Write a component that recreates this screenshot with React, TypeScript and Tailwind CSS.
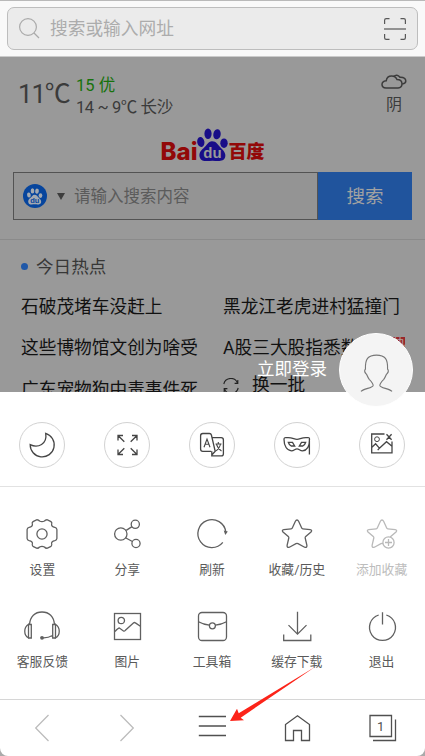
import type { ReactNode } from "react";
import clsx from "clsx";

const Icon = ({
  children,
  width = 1.3,
  className = "text-[#606060]",
}: {
  children: ReactNode;
  width?: number;
  className?: string;
}) => (
  <svg
    viewBox="-18 -18 36 36"
    className={clsx("size-9 shrink-0", className)}
    fill="none"
    stroke="currentColor"
    strokeWidth={width}
  >
    {children}
  </svg>
);

const STAR =
  "M0-14 Q1-14 1.6-12.8 L4.7-6 Q5-5.3 5.8-5.2 L13.2-4.4 Q15.6-4 14-2 L8.7 2.6 Q8 3.2 8.2 4 L9.9 11.4 Q10 14 7.6 13.2 L1 9.7 Q0 9.2-1 9.7 L-7.6 13.2 Q-10 14-9.9 11.4 L-8.2 4 Q-8 3.2-8.7 2.6 L-14-2 Q-15.6-4-13.2-4.4 L-5.8-5.2 Q-5-5.3-4.7-6 L-1.6-12.8 Q-1-14 0-14Z";

const quickActions = [
  {
    name: "night",
    icon: <path d="M3.7-11.6 A12 12 0 1 1-11.8-0.4 C-4 3.5 5.5-1 3.7-11.6Z" />,
  },
  {
    name: "fullscreen",
    icon: (
      <path d="M-2.7-3.2-9-9.5M-9-4.5V-9.5H-4M3.7-3.2 10-9.5M5-9.5H10V-4.5M-2.7 3.2-9 9.5M-9 4.5V9.5H-4M3.7 3.2 10 9.5M5 9.5H10V4.5" />
    ),
  },
  {
    name: "translate",
    icon: (
      <>
        <path d="M-.8 6.3H-9.2Q-11.4 6.3-11.4 4.1V-9.3Q-11.4-11.5-9.2-11.5H-2.6Q-1-11.5-.6-10L3.2 6.3-.2 10V6.3M0.2-7.3H9.2Q11.4-7.3 11.4-5.1V8.7Q11.4 10.9 9.2 10.9H0.5L-.2 10" />
        <path d="M-8 2.3-5-6-2 2.3M-7-0.8H-3M3.5-1H9.5M6.3-3V-1M8.5-1Q7.5 4 3.5 6M4.5-.5Q6 4 9.5 6" strokeWidth="1.1" />
      </>
    ),
  },
  {
    name: "incognito",
    icon: (
      <>
        <path d="M-13-5.7C-13-8-11-7.3-9-7.3-4-7.3-3-5.7 0-5.7S4-7.3 9-7.3C11-7.3 12.7-8 12.5-5.7 12.5 1 10 5.6 5.5 5.8 3 5.8 2 3.8 0 3.8S-3 5.8-5.5 5.8C-10 5.6-13 1-13-5.7ZM12.4-6V9.5" />
        <path d="M-8.7-2.7H-4.5L-2.3 1H-5.8Q-8-.2-8.7-2.7ZM8.7-2.7H4.5L2.3 1H5.8Q8-.2 8.7-2.7Z" />
      </>
    ),
  },
  {
    name: "no-image",
    icon: (
      <>
        <path d="M2.5-11H-10.3V7.8H10V-3.5M-10.3 2.5-6.4-1.2-2.6 3.2-4.3 5.2M-2.6 3.2 4.5-3.3 10 1.2M4.5-10.8 9.6-5.2M9.6-10.8 4.5-5.2" />
        <circle cx="-5" cy="-5.8" r="2.4" strokeWidth="1" />
      </>
    ),
  },
];

const menuItems = [
  {
    label: "设置",
    icon: (
      <>
        <path d="M-5.5-14.2Q-3.5-14.4-2.5-13 0-11.6 2.5-13 3.5-14.4 5.5-14.2L9-12.4Q10.3-11.5 9.6-9.4 9.5-7.2 12.8-6.6 14.8-6 14.9-4.5V4.5Q14.8 6 12.8 6.6 9.5 7.2 9.6 9.4 10.3 11.5 9 12.4L5.5 14.2Q3.5 14.4 2.5 13 0 11.6-2.5 13-3.5 14.4-5.5 14.2L-9 12.4Q-10.3 11.5-9.6 9.4-9.5 7.2-12.8 6.6-14.8 6-14.9 4.5V-4.5Q-14.8-6-12.8-6.6-9.5-7.2-9.6-9.4-10.3-11.5-9-12.4Z" />
        <circle r="5.1" />
      </>
    ),
  },
  {
    label: "分享",
    icon: (
      <>
        <circle cx="-6.2" r="6.2" />
        <circle cx="8.3" cy="-9.7" r="4.1" />
        <circle cx="9" cy="9.5" r="4.1" />
        <path d="M-.8-3.6 5-7.4M-1.1 4 5.4 7.5" />
      </>
    ),
  },
  {
    label: "刷新",
    icon: (
      <>
        <path d="M10.8 8.4A14 14 0 1 1 13.8-2" />
        <path d="M11.7-3.5 15.8-2.6 13.3 1Z" fill="currentColor" stroke="none" />
      </>
    ),
  },
  { label: "收藏/历史", icon: <path d={STAR} /> },
  {
    label: "添加收藏",
    disabled: true,
    icon: (
      <>
        <path d={STAR} />
        <circle cx="6.5" cy="8.5" r="5.6" fill="#fff" />
        <path d="M3 8.5H10M6.5 5V12" />
      </>
    ),
  },
  {
    label: "客服反馈",
    icon: (
      <>
        <path d="M-12.4-1.5C-12-9.5-7-14 0-14S12-9.5 12.4-1.5" />
        <path d="M-13.5-1.8C-18.5 1.5-18.5 9-13.5 12ZM13.5-1.8C18.5 1.5 18.5 9 13.5 12Z" />
        <path d="M-13.5-1.5H-10.7V12H-13.5M13.5-1.5H10.7V12H13.5M10.5 9.5Q6 12 1 11.8" />
        <circle cx="0" cy="11.8" r="1.9" fill="currentColor" stroke="none" />
      </>
    ),
  },
  {
    label: "图片",
    icon: (
      <>
        <rect x="-12.5" y="-12.5" width="26" height="26" />
        <circle cx="-5.7" cy="-5.5" r="3.2" />
        <path d="M-12 5.5Q-8.6 1.8-7.6 2L-3.6 5Q-2.6 5.5-1.6 4.3L6.4-3Q7.4-3.9 8.4-3.1L13.4.2" />
      </>
    ),
  },
  {
    label: "工具箱",
    icon: (
      <>
        <rect x="-13.5" y="-13.5" width="28" height="28" rx="3.5" />
        <path d="M-13.5-4.2Q-8.6-1.4-2.6-.8M14.5-4.2Q9.4-1.4 3.4-.8" />
        <circle cx=".4" cy="-.2" r="3" />
      </>
    ),
  },
  {
    label: "缓存下载",
    icon: <path d="M.5-14.2V8.3M-8.5-.9 .5 8.1 9.5-.9M-13.3 8.5V14.5H13.8V8.5" />,
  },
  {
    label: "退出",
    icon: (
      <path
        d="M-3.8-11.4A13 13 0 1 0 3.8-11.4M0-14.2V-2"
        transform="translate(.5 .4)"
      />
    ),
  },
];

const Paw = ({ className, color, text }: { className: string; color: string; text: string }) => (
  <svg viewBox="0 0 31 34" className={className} fill={color}>
    <ellipse cx="3.8" cy="14" rx="3.6" ry="5" transform="rotate(-8 3.8 14)" />
    <ellipse cx="11" cy="5.8" rx="3.6" ry="5.2" />
    <ellipse cx="20" cy="6.3" rx="3.7" ry="5.1" transform="rotate(10 20 6.3)" />
    <ellipse cx="27" cy="15.2" rx="3.7" ry="4.8" />
    <path d="M15 13.3C11 13.3 10 17.5 6.5 20.2 3 23 1.5 26 3 30 4.5 34 10 33 15.5 32.7 21 33 27 34 28.2 29 29.2 25 26 22 23.5 19.5 21 17 19.5 13.3 15 13.3Z" />
    <text
      x="15.5"
      y="29.5"
      textAnchor="middle"
      fill={text}
      fontSize="15"
      fontWeight="700"
      fontFamily="Liberation Sans, sans-serif"
    >
      du
    </text>
  </svg>
);

const AddressBar = () => (
  <header className="h-[57px] border-t border-b border-t-[#b9b9b9] border-b-[#cbcbcb] bg-[#f9f9f9] px-[7px] pt-[6px]">
    <div className="flex h-[43px] items-center rounded-[7px] border border-[#bdbdbd] bg-[#ebebeb] pr-[11px] pl-[11px]">
      <svg viewBox="0 0 21 21" className="size-[21px]" fill="none" stroke="#aaa" strokeWidth="1.2">
        <circle cx="9" cy="9" r="8.4" />
        <path d="M15 15 20 20" />
      </svg>
      <span className="mt-[3px] ml-[10px] text-[17.7px] leading-none text-[#acacac]">搜索或输入网址</span>
      <svg viewBox="0 0 22 22" className="ml-auto size-[22px]" fill="none" stroke="#585858" strokeWidth="1.2">
        <path d="M.6 6V2.2Q.6.6 2.2.6H5.5M16.5.6H19.8Q21.4.6 21.4 2.2V6M.6 16V19.8Q.6 21.4 2.2 21.4H5.5M16.5 21.4H19.8Q21.4 21.4 21.4 19.8V16" />
        <path d="M0 11H22" stroke="#888" strokeWidth="1.8" />
      </svg>
    </div>
  </header>
);

const Weather = () => (
  <div className="flex h-[68px] pt-[17px] pr-[18px] pl-[18px] text-[#3b3b3b]">
    <span className="mt-[7px] w-[51px] text-[26px] leading-[26px] tracking-[-1.2px]">11℃</span>
    <div className="mt-px ml-[7px] text-[16.5px] leading-[21.5px]">
      <p className="text-[#17720c]">15 优</p>
      <p className="tracking-[-0.4px] whitespace-pre">14 ~ 9℃ 长沙</p>
    </div>
    <div className="ml-auto flex flex-col items-center">
      <svg viewBox="0 0 26 15" className="h-[15px] w-[26px]" fill="none" stroke="#3b3b3b" strokeWidth="1.5">
        <path d="M5 14Q1 13.6 1 10.4 1 7.4 5.2 6.8 6 2 10.6 2 14.5 2 16 5.5 20.8 5.5 21 9.7 21 13.7 17 14Z" />
        <path d="M12.5 2.5Q16-.5 19 3.2 24.6 3 24.8 7 24.8 9.6 21.2 10" />
      </svg>
      <span className="mt-[7px] text-[16px] leading-[18px]">阴</span>
    </div>
  </div>
);

const SearchForm = () => (
  <div className="flex h-[48px] px-[13px]">
    <div className="flex flex-1 items-center border border-[#535353] bg-[#949494] pl-[9px]">
      <span className="flex size-6 items-center justify-center rounded-full bg-[#07459d]">
        <Paw className="h-[17px] w-[15.5px]" color="#a3a9b1" text="#07459d" />
      </span>
      <svg viewBox="0 0 8 7" className="ml-[10px] h-[7px] w-2" fill="#3d3d3d">
        <path d="M0 0H8L4 7Z" />
      </svg>
      <span className="mt-[3px] ml-[9px] text-[16.5px] leading-none text-[#5b5b5b]">请输入搜索内容</span>
    </div>
    <button className="w-[94px] bg-[#20549d] pt-[3px] text-[18.5px] text-[#a2a2a2]">搜索</button>
  </div>
);

const HotNews = () => (
  <section className="mt-[19px] border-t border-[#8a8a8a] pt-[14px]">
    <h2 className="flex h-[24px] items-center pl-[21px] text-[17.6px] text-[#373737]">
      <i className="mr-[8px] size-[7px] rounded-full bg-[#2058a8]" />
      <span className="mt-[2px]">今日热点</span>
    </h2>
    <div className="mt-[9px] grid auto-rows-[41.5px] grid-cols-[202px_1fr] items-center pl-[21px] text-[17.7px] leading-none whitespace-nowrap text-[#111]">
      <span>石破茂堵车没赶上</span>
      <span>黑龙江老虎进村猛撞门</span>
      <span>这些博物馆文创为啥受</span>
      <span className="flex h-[18px] items-center">
        A股三大股指悉数
        <b className="mb-3 ml-[34px] bg-[#98272b] text-[13px] font-normal text-[#b5a0a0]">热</b>
      </span>
      <span>广东宠物狗中毒事件死</span>
      <span className="-mt-[9px] flex items-center">
        <svg viewBox="0 0 16 16" className="mr-[13px] size-4" fill="none" stroke="#222" strokeWidth="1.1">
          <path d="M.8 6A7.2 7.2 0 0 1 14.5 5M15.2 10A7.2 7.2 0 0 1 1.5 11M14.8 2V5.4H11.6M1.2 14V10.6H4.4" />
        </svg>
        换一批
      </span>
    </div>
  </section>
);

const LoginEntry = () => (
  <div className="absolute top-[333px] right-[12px] flex items-center gap-[12px]">
    <span className="text-[17.5px] leading-none text-white">立即登录</span>
    <span className="flex size-[74px] items-center justify-center rounded-full border border-white bg-[#f4f4f4]">
      <svg viewBox="0 0 34 40" className="mt-[7px] h-[39px] w-[33px]" fill="none" stroke="#777" strokeWidth="1.2">
        <path d="M1 38.5C4 35.5 13 35 13.5 32.5 13.8 30.5 12.5 29 9.5 26 7.5 23.5 7.5 21 6 20 4.5 18.5 4.5 16.5 5.6 15.5 5.2 5.5 8 1 17 1S28.8 5.5 28.4 15.5C29.5 16.5 29.5 18.5 28 20 26.5 21 26.5 23.5 24.5 26 21.5 29 20.2 30.5 20.5 32.5 21 35 30 35.5 33 38.5" />
      </svg>
    </span>
  </div>
);

const BottomNav = () => (
  <nav className="grid h-[57px] grid-cols-5 items-center justify-items-center border-t border-[#d6d6d6] pr-px">
    <Icon className="text-[#bcbcbc]">
      <path d="M6.5-13-6.3 0 6.5 13" />
    </Icon>
    <Icon className="text-[#bcbcbc]">
      <path d="M-6.5-13 6.3 0-6.5 13" />
    </Icon>
    <Icon className="text-[#505050]">
      <path d="M-13.2-11.5H14M-13.2-2H14M-13.2 7.5H14" />
    </Icon>
    <Icon className="text-[#505050]">
      <path d="M-11.5 12.5V-3.5L.5-12.3 12.5-3.5V12.5H4.5V2.5H-3.5V12.5Z" />
    </Icon>
    <Icon className="text-[#505050]">
      <path d="M-12-12.5H9.5V8.5H-12ZM13.5-8.5V12.5H-9" />
      <text
        x="-1.4"
        y="3.2"
        textAnchor="middle"
        fontSize="13"
        fill="currentColor"
        stroke="none"
      >
        1
      </text>
    </Icon>
  </nav>
);

const App = () => {
  return (
    <div className="relative h-[756px] w-[425px] overflow-hidden bg-[#aaa] font-[Roboto,'Noto_Sans_CJK_SC',sans-serif]">
      <div className="h-full overflow-hidden rounded-b-[8px] bg-white">
        <AddressBar />
        <main className="h-[335px] overflow-hidden bg-[#999]">
          <Weather />
          <div className="flex h-[47px] items-start justify-center text-[#920808]">
            <span className="mt-[13px] font-[Inter,sans-serif] text-[24px] leading-[27px] font-extrabold">Bai</span>
            <Paw className="mt-[3px] h-[34px] w-[31px]" color="#180d88" text="#999" />
            <span className="mt-[13px] text-[18px] leading-[27px] font-black">百度</span>
          </div>
          <SearchForm />
          <HotNews />
        </main>

        <div className="grid h-[95px] grid-cols-5 items-center justify-items-center border-b border-[#e2e2e2] pt-[11px] pr-px">
          {quickActions.map((item) => (
            <button
              key={item.name}
              className="flex size-[46px] items-center justify-center rounded-full border border-[#d2d2d2]"
            >
              <Icon className="text-[#454545]">{item.icon}</Icon>
            </button>
          ))}
        </div>

        <div className="grid h-[212px] auto-rows-[92px] grid-cols-5 pt-[29px] pr-px">
          {menuItems.map((item) => (
            <button
              key={item.label}
              className={clsx(
                "flex flex-col items-center text-[12.8px] leading-[18px]",
                item.disabled ? "text-[#bdbdbd]" : "text-[#5a5a5a]"
              )}
            >
              <Icon className={item.disabled ? "text-[#b9b9b9]" : "text-[#606060]"}>{item.icon}</Icon>
              <span className="mt-[9px]">{item.label}</span>
            </button>
          ))}
        </div>
        <BottomNav />
      </div>

      <LoginEntry />
      <svg viewBox="0 0 88 56" className="absolute top-[666px] left-[229px] h-14 w-[88px]">
        <path d="M1 55 8 42.7 9.7 47.3 86.3.7 11.7 51.7 15 54.3Z" fill="#fc2419" />
      </svg>
    </div>
  );
};

export default App;
